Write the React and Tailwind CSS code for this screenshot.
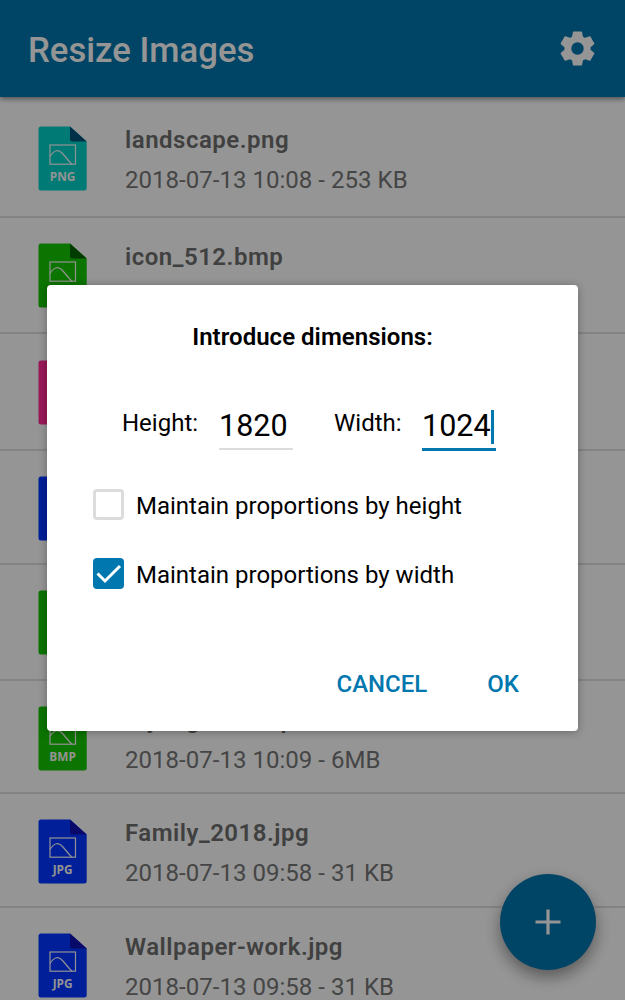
import React, { useState } from "react";

const fileColors = {
  PNG: { body: "#00cbc3", fold: "#005078" },
  BMP: { body: "#14c100", fold: "#006400" },
  GIF: { body: "#ff2b93", fold: "#a00050" },
  JPG: { body: "#0034ff", fold: "#1010b0" },
};

const files = [
  { name: "landscape.png", info: "2018-07-13 10:08 - 253 KB", type: "PNG", row: "h-[121px] pt-[29px]" },
  { name: "icon_512.bmp", type: "BMP", row: "h-[116px] pt-[25px]" },
  { type: "GIF", row: "h-[117px] pt-[26px]" },
  { type: "JPG", row: "h-[114px] pt-[25px]" },
  { type: "BMP", row: "h-[116px] pt-[25px]" },
  { name: "My logo-2.bmp", info: "2018-07-13 10:09 - 6MB", type: "BMP", row: "h-[113px] pt-[25px]" },
  { name: "Family_2018.jpg", info: "2018-07-13 09:58 - 31 KB", type: "JPG", row: "h-[114px] pt-[25px]" },
  { name: "Wallpaper-work.jpg", info: "2018-07-13 09:58 - 31 KB", type: "JPG", row: "h-[114px] pt-[25px]" },
];

const gearTeeth = [0, 60, 120, 180, 240, 300];

const GearIcon = () => (
  <svg width="35" height="35" viewBox="-18 -18 36 36">
    <circle r="9.900" fill="none" stroke="currentColor" strokeWidth="7" />
    {gearTeeth.map((angle) => (
      <path
        key={angle}
        d="M-4-17.600H4Q4.600-17.600 4.700-17L5.700-11.500H-5.700L-4.700-17Q-4.600-17.600-4-17.600Z"
        transform={`rotate(${angle})`}
        fill="currentColor"
      />
    ))}
  </svg>
);

const FileIcon = ({ type }) => {
  const { body, fold } = fileColors[type];

  return (
    <svg width="49" height="65" viewBox="0 0 49 65" className="shrink-0">
      <path
        d="M3 .5H32L48.7 15.5V62a2.5 2.5 0 0 1-2.5 2.5H3A2.5 2.5 0 0 1 .5 62V3A2.5 2.5 0 0 1 3 .5Z"
        fill={body}
      />
      <path d="M32 .5 48.7 15.5H34.5A2.5 2.5 0 0 1 32 13Z" fill={fold} />
      <g fill="none" stroke="#f5f5f5" strokeWidth="1.200">
        <rect x="12" y="19" width="25.5" height="19.2" />
        <path d="M12 30.5C16 24 20.5 22.5 25 28C28 31.500 31 35.500 34 38.200" />
      </g>
      <text
        x="24.600"
        y="55.300"
        textAnchor="middle"
        fill="#f5f5f5"
        fontSize="11.800"
        fontWeight="700"
        fontFamily="Open Sans, sans-serif"
      >
        {type}
      </text>
    </svg>
  );
};

const FileRow = ({ file }) => (
  <li className={`flex shrink-0 border-b-2 border-[#dadada] pl-[38px] ${file.row}`}>
    <FileIcon type={file.type} />
    <div className="ml-[38px] whitespace-nowrap">
      {file.name && (
        <p className="text-[24px] leading-[28px] font-semibold tracking-[0.5px] text-[#6c6c6c]">
          {file.name}
        </p>
      )}
      {file.info && (
        <p className="mt-3 text-[24px] leading-[28px] tracking-[0.03px] text-[#747474]">
          {file.info}
        </p>
      )}
    </div>
  </li>
);

const Checkbox = ({ label, checked, onChange }) => (
  <label className="flex h-[31px] items-center">
    <input
      type="checkbox"
      checked={checked}
      onChange={onChange}
      className="sr-only"
    />
    <span
      className={
        checked
          ? "flex size-[31px] items-center justify-center rounded-[4px] bg-[#0077ae]"
          : "size-[31px] rounded-[4px] border-[3px] border-[#dcdcdc]"
      }
    >
      {checked && (
        <svg width="31" height="31" viewBox="0 0 31 31">
          <path
            d="M4.500 15.500 12 23 27 8"
            fill="none"
            stroke="#fff"
            strokeWidth="3"
          />
        </svg>
      )}
    </span>
    <span className="ml-3 pt-[3px] text-[24px] leading-[28px]">{label}</span>
  </label>
);

const ResizeDialog = () => {
  const [keep, setKeep] = useState("width");

  return (
    <div
      role="dialog"
      className="h-[446px] w-[531px] rounded-[4px] bg-white text-black shadow-[0_1px_8px_rgba(0,0,0,0.3)]"
    >
      <h2 className="pt-[38px] text-center text-[24px] leading-[28px] font-semibold tracking-[0.03px]">
        Introduce dimensions:
      </h2>

      <div className="mt-[55px] flex pl-[75px] text-[24px] leading-[28px]">
        <span className="w-[97px] pt-[3px]">Height:</span>
        <span className="h-[44px] w-[74px] border-b-2 border-[#dcdcdc] text-[30.500px] leading-[40px]">
          1820
        </span>
        <span className="ml-[41px] w-[88px] pt-[3px]">Width:</span>
        <span className="flex h-[45px] w-[74px] border-b-[3px] border-[#0077ae] text-[30.500px] leading-[40px]">
          1024
          <span className="mt-1 h-[34px] w-[3px] bg-[#0077ae]" />
        </span>
      </div>

      <div className="mt-[38px] flex flex-col gap-[38px] pl-[46px]">
        <Checkbox
          label="Maintain proportions by height"
          checked={keep === "height"}
          onChange={() => setKeep("height")}
        />
        <Checkbox
          label="Maintain proportions by width"
          checked={keep === "width"}
          onChange={() => setKeep("width")}
        />
      </div>

      <div className="mt-[81px] flex justify-end gap-[60px] pr-[59px] text-[24px] leading-[28px] font-medium text-[#0077ae]">
        <button>CANCEL</button>
        <button>OK</button>
      </div>
    </div>
  );
};

export default function App() {
  return (
    <div className="relative h-[1000px] w-[625px] overflow-hidden bg-[#f9f9f9] font-['Roboto',sans-serif]">
      <div className="flex h-full flex-col">
        <header className="z-10 flex h-[97px] shrink-0 items-center justify-between bg-[#0073a8] pr-[30px] pl-[28px] text-[#f9f9f9] shadow-[0_2px_5px_rgba(0,0,0,0.45)]">
          <h1 className="pt-[3px] text-[34.700px] leading-[40px] font-medium">
            Resize Images
          </h1>
          <GearIcon />
        </header>
        <ul className="flex flex-col">
          {files.map((file, i) => (
            <FileRow key={i} file={file} />
          ))}
        </ul>
      </div>

      <button className="absolute right-[29px] bottom-[30px] flex size-[96px] items-center justify-center rounded-full bg-[#0073a8] shadow-[0_7px_16px_rgba(0,0,0,0.4)]">
        <svg width="26" height="26" viewBox="0 0 26 26">
          <path d="M13 .5v25M.5 13h25" stroke="#f9f9f9" strokeWidth="3.200" />
        </svg>
      </button>

      {/* dimmed backdrop */}
      <div className="absolute inset-0 z-20 flex items-start justify-center bg-black/40 pt-[285px]">
        <ResizeDialog />
      </div>
    </div>
  );
}
